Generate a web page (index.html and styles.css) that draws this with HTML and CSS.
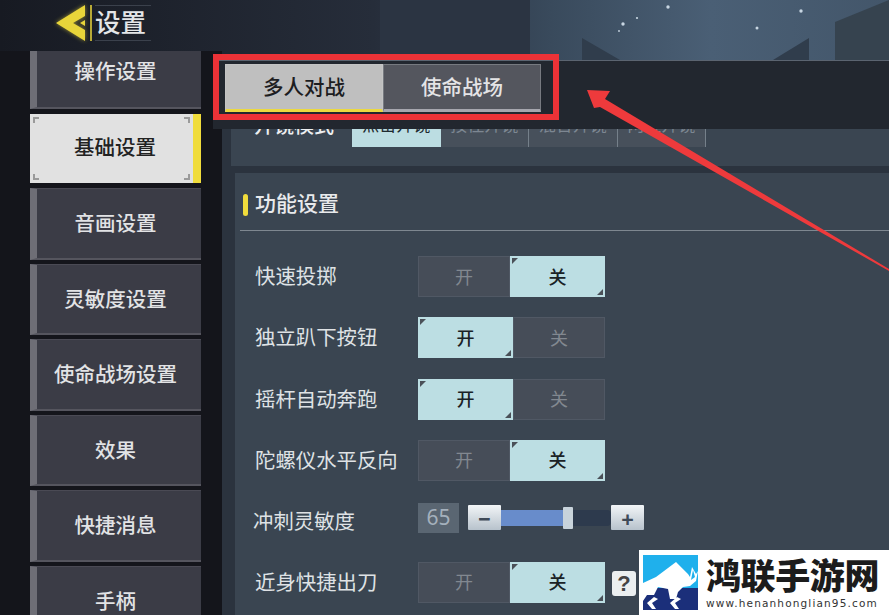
FILE: index.html
```html
<!DOCTYPE html>
<html lang="zh-CN">
<head>
    <meta charset="UTF-8">
    <meta name="viewport" content="width=device-width, initial-scale=1.0">
    <title>设置</title>
    <link rel="stylesheet" href="styles.css">
</head>
<body>
    <svg class="sky" viewBox="0 0 889 60" width="889" height="60">
        <defs>
            <linearGradient id="skyfade" x1="0" x2="1" y1="0" y2="0">
                <stop offset="0" stop-color="#171a22"/>
                <stop offset="0.42" stop-color="#262d3a"/>
                <stop offset="0.62" stop-color="#394a5c"/>
                <stop offset="0.8" stop-color="#4a5f75"/>
                <stop offset="1" stop-color="#43566a"/>
            </linearGradient>
        </defs>
        <rect width="889" height="60" fill="url(#skyfade)"/>
        <path d="M380 0H530V60H380Z" fill="#2b3442"/>
        <path d="M582 38L620 60H582Z" fill="#303d4c"/>
        <path d="M773 60L809 38V60Z" fill="#303d4c"/>
        <path d="M835 22L889 0V60H835Z" fill="#36434f"/>
        <g fill="#c8d6e2">
            <circle cx="668" cy="7" r="1.7"/><circle cx="801" cy="11" r="1.7"/><circle cx="623" cy="24" r="1.7"/>
            <circle cx="757" cy="28" r="1.5"/><circle cx="637" cy="18" r="1.1"/><circle cx="619" cy="31" r="0.9"/>
        </g>
    </svg>

    <header class="top">
        <svg class="back" viewBox="0 0 34 40" width="34" height="40">
            <path d="M31 2V13L19 20L31 27V38L2 20Z M31 17L26 20L31 23Z" fill="#e8d53a"/>
        </svg>
        <span class="top-rule"></span>
        <h1>设置</h1>
    </header>

    <div class="layout">
        <nav class="side">
            <a class="side-item first">操作设置</a>
            <a class="side-item active">基础设置<i class="cn tl"></i><i class="cn tr"></i><i class="cn bl"></i><i class="cn br"></i></a>
            <a class="side-item">音画设置</a>
            <a class="side-item">灵敏度设置</a>
            <a class="side-item">使命战场设置</a>
            <a class="side-item">效果</a>
            <a class="side-item">快捷消息</a>
            <a class="side-item">手柄</a>
        </nav>

        <main class="main">
            <div class="tabbar">
                <button class="tab on">多人对战</button>
                <button class="tab">使命战场</button>
            </div>

            <section class="panel scope">
                <div class="scope-row">
                    <span class="scope-label">开镜模式</span>
                    <div class="scope-seg">
                        <span class="seg-on">点击开镜</span>
                        <span>按住开镜</span>
                        <span>混合开镜</span>
                        <span>两键开镜</span>
                    </div>
                </div>
            </section>

            <section class="panel func">
                <h2 class="func-head">功能设置</h2>
                <div class="row">
                    <label>快速投掷</label>
                    <div class="toggle"><span>开</span><span class="sel">关</span></div>
                </div>
                <div class="row">
                    <label>独立趴下按钮</label>
                    <div class="toggle"><span class="sel">开</span><span>关</span></div>
                </div>
                <div class="row">
                    <label>摇杆自动奔跑</label>
                    <div class="toggle"><span class="sel">开</span><span>关</span></div>
                </div>
                <div class="row">
                    <label>陀螺仪水平反向</label>
                    <div class="toggle"><span>开</span><span class="sel">关</span></div>
                </div>
                <div class="row slider-row">
                    <label>冲刺灵敏度</label>
                    <div class="slider">
                        <output class="value">65</output>
                        <button class="step">−</button>
                        <div class="track"><div class="fill"></div><div class="thumb"></div></div>
                        <button class="step">+</button>
                    </div>
                </div>
                <div class="row">
                    <label>近身快捷出刀</label>
                    <div class="toggle"><span>开</span><span class="sel">关</span></div>
                    <span class="help">?</span>
                </div>
            </section>
        </main>
    </div>

    <!-- annotation drawn over the screenshot -->
    <div class="red-box"></div>
    <svg class="arrow" viewBox="0 0 889 615" width="889" height="615">
        <path d="M587 90L610 91L605 99L889 269L889 271L600 107L594 108Z" fill="#ee3a3c"/>
    </svg>

    <aside class="mark">
        <svg class="mark-logo" viewBox="0 0 55 55" width="55" height="55">
            <rect width="55" height="55" fill="#1fb0ec"/>
            <rect y="33" width="55" height="22" fill="#1b2f7a"/>
            <path d="M0 28L13 22L33 7L45 19L47 22L49 12L53 19L55 16L53 26L47 31L40 32L35 37L33 44H27L25 34L15 32L11 40H4L0 46Z" fill="#fff"/>
            <path d="M50 15L52 22L48 25Z" fill="#1fb0ec"/>
            <path d="M11 42L4 48L9 54H13L9 48L15 44Z M34 42L27 48L32 54H36L32 48L38 44Z" fill="#fff"/>
        </svg>
        <div class="mark-text">
            <strong>鸿联手游网</strong>
            <small>www.henanhonglian95.com</small>
        </div>
    </aside>
</body>
</html>
```

FILE: styles.css
```css
* {
    box-sizing: border-box;
}

html, body {
    height: 100%;
}

body {
    margin: 0;
    position: relative;
    overflow: hidden;
    display: flex;
    flex-direction: column;
    background-color: #121319;
    color: #e6e8ea;
    font-family: "Noto Sans CJK SC", "Noto Sans", sans-serif;
}

.sky {
    position: absolute;
    top: 0;
    left: 0;
}

/* Header */
.top {
    position: relative;
    height: 51px;
    flex: none;
    display: flex;
    align-items: center;
    padding: 0 0 5px 54px;
}

.back {
    flex: none;
    filter: drop-shadow(0 0 2px rgba(232, 213, 58, 0.6));
}

.top-rule {
    width: 2px;
    height: 36px;
    margin: 0 3px 0 2px;
    background-color: #b7a936;
}

.top h1 {
    margin: 0;
    height: 36px;
    font-size: 25.5px;
    line-height: 30px;
    font-weight: 500;
    color: #e4e6e8;
    border-top: 1px solid #3b414c;
    border-bottom: 1px solid #3b414c;
    padding: 0 5px 0 0;
}

.layout {
    position: relative;
    flex: 1;
    min-height: 0;
    display: flex;
}

/* Left menu */
.side {
    width: 222px;
    flex: none;
    padding-left: 30px;
    padding-right: 21px;
    display: flex;
    flex-direction: column;
    gap: 4px;
    background-color: #14151b;
}

.side-item {
    position: relative;
    flex: none;
    height: 71.5px;
    display: flex;
    align-items: center;
    justify-content: center;
    font-size: 20.5px;
    font-weight: 500;
    background-color: #3b3c46;
    border-left: 7px solid #6e6e76;
    border-top: 1px solid #4a4a54;
    border-bottom: 2px solid #55555e;
    color: #e2e3e5;
    padding: 0 7px 2px 0;
}

.side-item.first {
    height: 58px;
    padding-bottom: 19px;
    border-top: 0;
    margin-bottom: 1px;
}

.side-item.active {
    height: 69px;
    margin-bottom: 1px;
    background-color: #e1e1e1;
    border: 0;
    border-right: 8px solid #f0dc3c;
    color: #222;
    padding: 0 0 6px 7px;
}

.cn {
    position: absolute;
    width: 6px;
    height: 6px;
    border: 0 solid #9a9a9a;
}

.cn.tl { top: 3px; left: 3px; border-top-width: 2px; border-left-width: 2px; }
.cn.tr { top: 3px; right: 3px; border-top-width: 2px; border-right-width: 2px; }
.cn.bl { bottom: 3px; left: 3px; border-bottom-width: 2px; border-left-width: 2px; }
.cn.br { bottom: 3px; right: 3px; border-bottom-width: 2px; border-right-width: 2px; }

/* Right side */
.main {
    flex: 1;
    min-width: 0;
    padding: 9px 0 0 0;
    background: linear-gradient(transparent 9px, #2b333e 9px);
}

.tabbar {
    height: 69px;
    margin-left: -9px;
    padding: 3px 0 0 12px;
    display: flex;
    align-items: flex-start;
    background-color: #22272f;
    border-top: 1px solid #5b6470;
}

.tab {
    width: 158px;
    height: 48px;
    padding: 0 0 3px;
    border: 1px solid #777a80;
    border-bottom: 3px solid #a6a6ae;
    font-family: inherit;
    font-size: 20.5px;
    font-weight: 500;
    color: #e4e4e6;
    background-color: #54565e;
}

.tab.on {
    color: #1d1d1f;
    background-color: #bfbfbf;
    border-color: #c4c4c4;
    border-bottom-color: #ecd93f;
}

.panel {
    margin-left: 9px;
    background-color: #3a4551;
}

.scope {
    height: 37px;
    overflow: hidden;
}

/* this row is scrolled half out of view in the game */
.scope-row {
    margin-top: -28px;
    height: 46px;
    display: flex;
    align-items: center;
    padding-left: 23px;
}

.scope-label {
    width: 98px;
    font-size: 20px;
    font-weight: 500;
    color: #eceef0;
}

.scope-seg {
    display: flex;
    height: 46px;
}

.scope-seg span {
    width: 88.5px;
    text-align: center;
    font-size: 17px;
    line-height: 46px;
    color: #7d8792;
    background-color: #47505b;
    border-right: 1px solid #75808a;
}

.scope-seg .seg-on {
    color: #1d2a30;
    background-color: #bcdde2;
    border: 0;
}

.func {
    height: 443px;
    margin: 7px 0 0 13px;
    padding: 0 0 0 5px;
}

.func-head {
    margin: 0 0 25px;
    height: 58px;
    padding: 16px 0 0 15px;
    position: relative;
    font-size: 21px;
    line-height: 26px;
    font-weight: 500;
    color: #e8eaec;
    border-bottom: 1px solid #7e8790;
}

.func-head::before {
    content: "";
    position: absolute;
    top: 21px;
    left: 3px;
    width: 5px;
    height: 22px;
    border-radius: 3px;
    background-color: #f0dc3c;
}

.row {
    display: flex;
    align-items: center;
    height: 41px;
    margin-bottom: 20.3px;
    padding-left: 15px;
}

.row label {
    width: 163px;
    padding-bottom: 3px;
    font-size: 20.4px;
    color: #dfe2e5;
}

.toggle {
    display: flex;
    width: 187px;
    height: 41px;
}

.toggle span {
    flex: 1;
    position: relative;
    display: flex;
    align-items: center;
    justify-content: center;
    padding-bottom: 2px;
    font-size: 18px;
    color: #828890;
    background-color: #464d58;
    border: 1px solid #505864;
}

.toggle .sel {
    flex: none;
    width: 95px;
    color: #1a2226;
    font-weight: 500;
    background-color: #bcdee3;
    border: 0;
}

.toggle .sel::before,
.toggle .sel::after {
    content: "";
    position: absolute;
    border-style: solid;
    border-color: transparent;
}

.toggle .sel::before {
    top: 2px;
    left: 2px;
    border-width: 6px 6px 0 0;
    border-top-color: #4a5058;
}

.toggle .sel::after {
    right: 2px;
    bottom: 2px;
    border-width: 0 0 6px 6px;
    border-bottom-color: #4a5058;
}

.slider-row {
    height: 30px;
    margin-top: 22px;
    margin-bottom: 29px;
}

.slider-row label {
    padding: 4px 0 0;
    margin-left: -2px;
    margin-right: 2px;
}

.slider {
    display: flex;
    align-items: center;
}

.value {
    width: 41px;
    height: 30px;
    margin-right: 9px;
    font-family: "Noto Sans", sans-serif;
    font-size: 21px;
    line-height: 29px;
    text-align: center;
    color: #a4b0bc;
    background-color: #5a6672;
}

.step {
    width: 33px;
    height: 25px;
    padding: 0;
    border: 0;
    border-radius: 1px;
    font-family: "Noto Sans", sans-serif;
    font-size: 22px;
    line-height: 22px;
    font-weight: 700;
    color: #3f4a58;
    background: linear-gradient(#f2f5f7, #b7c2cc);
}

.track {
    position: relative;
    width: 110px;
    height: 16px;
    background-color: #2d3a4d;
    border-radius: 0 4px 4px 0;
}

.fill {
    width: 62px;
    height: 100%;
    background-color: #688ccb;
}

.thumb {
    position: absolute;
    top: -3px;
    left: 62px;
    width: 10px;
    height: 22px;
    border-radius: 1px;
    background-color: #c8d3db;
}

.help {
    width: 24px;
    height: 25px;
    margin: 3px 0 0 7px;
    border-radius: 3px;
    text-align: center;
    font-family: "Liberation Sans", sans-serif;
    font-size: 22px;
    font-weight: 700;
    line-height: 25px;
    color: #444;
    background-color: #eceff0;
}

/* Overlays */
.red-box {
    position: absolute;
    top: 54px;
    left: 213px;
    width: 346px;
    height: 66px;
    border: 6px solid #ec3237;
}

.arrow {
    position: absolute;
    top: 0;
    left: 0;
}

.mark {
    position: absolute;
    left: 639px;
    top: 550px;
    width: 250px;
    height: 65px;
    padding: 5px 0 0 4px;
    display: flex;
    gap: 8px;
    background-color: #fff;
}

.mark-logo {
    flex: none;
}

.mark-text {
    display: flex;
    flex-direction: column;
    color: #1c1c1c;
}

.mark-text strong {
    font-family: "Noto Sans CJK SC", serif;
    font-size: 35px;
    line-height: 38px;
    font-weight: 900;
    letter-spacing: -0.4px;
    white-space: nowrap;
}

.mark-text small {
    font-family: "DejaVu Sans", sans-serif;
    font-size: 10.5px;
    line-height: 14px;
    margin-top: 3px;
    letter-spacing: 1.15px;
    color: #333;
    white-space: nowrap;
}
```
